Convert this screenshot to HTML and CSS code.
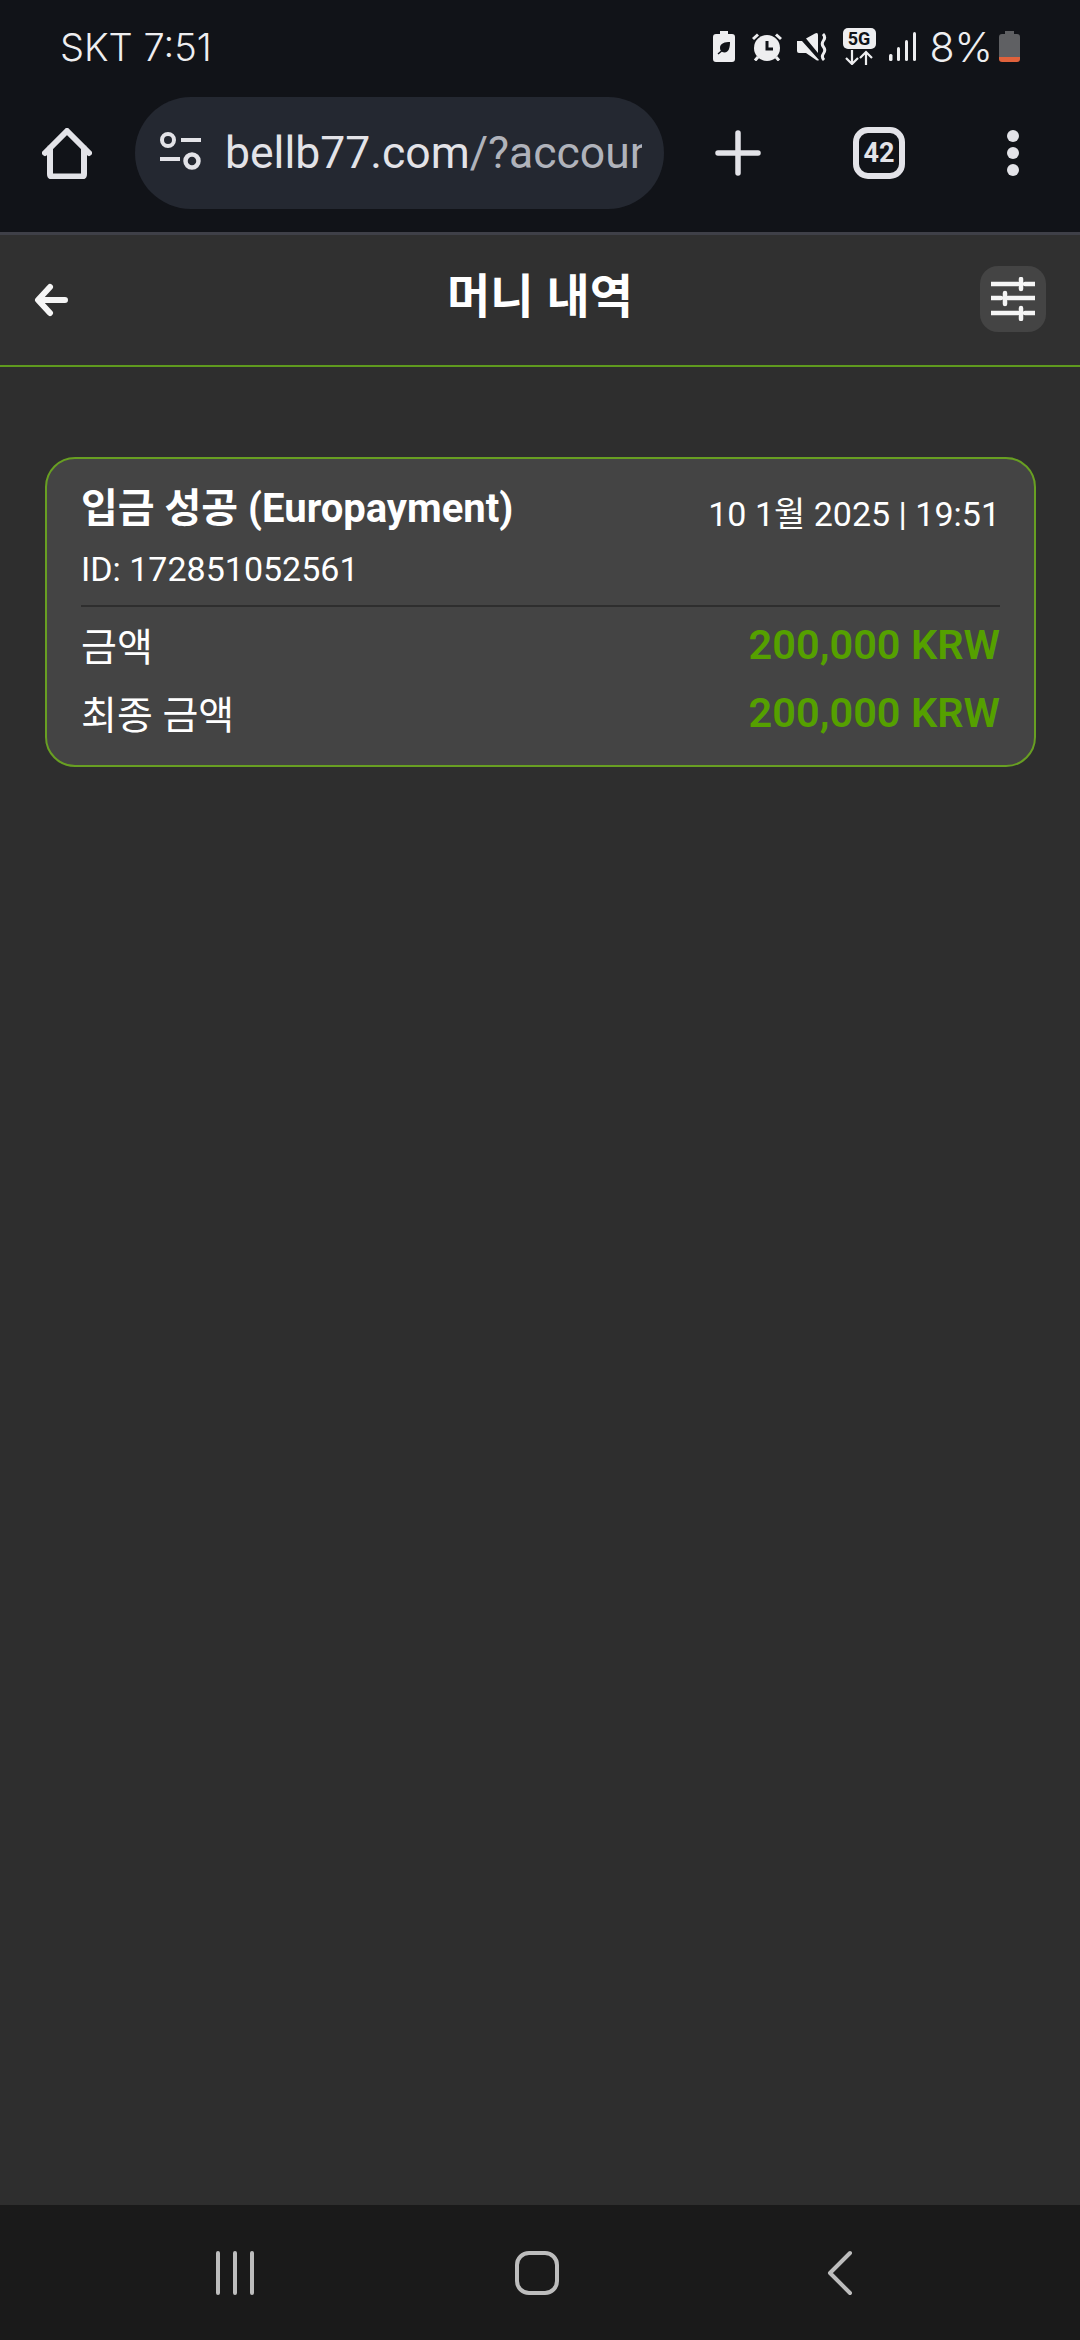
FILE: index.html
```html
<!DOCTYPE html>
<html lang="ko">
<head>
    <meta charset="UTF-8">
    <meta name="viewport" content="width=device-width, initial-scale=1.0">
    <title>머니 내역</title>
    <link rel="stylesheet" href="styles.css">
</head>
<body>
    <div class="chrome">
        <div class="status-bar">
            <span class="status-text">SKT 7:51</span>
            <div class="status-icons">
                <svg class="ico-leaf" viewBox="0 0 22 31">
                    <path fill="#eeeef0" fill-rule="evenodd" d="M7 0h8v3h4a3 3 0 0 1 3 3v22a3 3 0 0 1-3 3H3a3 3 0 0 1-3-3V6a3 3 0 0 1 3-3h4zM17 11c-5 0-10 1-10 6 0 1 .3 2 .8 2.700L4.500 22.500l1 1 3.300-2.800c.8.500 1.700.8 2.700.8 4.500 0 5.500-5.500 5.500-10.500z"/>
                </svg>
                <svg class="ico-alarm" viewBox="0 0 30 28">
                    <circle cx="15" cy="15" r="13" fill="#eeeef0"/>
                    <path d="M15 8v8h6" fill="none" stroke="#111318" stroke-width="3"/>
                    <path d="M1 6l5-4.500M29 6l-5-4.500M6 24l-3 3.500M24 24l3 3.500" fill="none" stroke="#eeeef0" stroke-width="3"/>
                </svg>
                <svg class="ico-mute" viewBox="0 0 30 28">
                    <path fill="#eeeef0" d="M0 8h5l17 19q-1 1-2.500.3L9 20H2q-2 0-2-2zM9 5.500l9-5q3-1.500 3 1.500v18z"/>
                    <path d="M26 1q3 3 .5 6.500t0 6.500 0 6.500 .5 6.500" fill="none" stroke="#eeeef0" stroke-width="3"/>
                </svg>
                <div class="ico-net">
                    <span class="net-badge">5G</span>
                    <svg viewBox="0 0 33 15">
                        <path d="M9 0v13M3 8l6 6 6-6M23 15V2M17 8l6-6 6 6" fill="none" stroke="#eeeef0" stroke-width="2.200"/>
                    </svg>
                </div>
                <svg class="ico-signal" viewBox="0 0 27 29">
                    <g fill="#eeeef0">
                        <rect x="0" y="22" width="3.500" height="7" rx="1.500"/>
                        <rect x="8" y="15" width="3" height="14" rx="1.500"/>
                        <rect x="16" y="8" width="3" height="21" rx="1.500"/>
                        <rect x="24" y="0" width="3" height="29" rx="1.500"/>
                    </g>
                </svg>
                <span class="status-text battery-pct">8%</span>
                <svg class="ico-battery" viewBox="0 0 21 31">
                    <path fill="#5f6063" d="M6 0h9v3h3a3 3 0 0 1 3 3v20H0V6a3 3 0 0 1 3-3h3z"/>
                    <path fill="#e0623c" d="M0 26h21v2a3 3 0 0 1-3 3H3a3 3 0 0 1-3-3z"/>
                </svg>
            </div>
        </div>
        <div class="toolbar">
            <svg class="ico-home" viewBox="0 0 50 51">
                <path d="M3 25L25 3l22 22M8 20v26q0 2.500 2.500 2.500h29q2.500 0 2.500-2.500V20" fill="none" stroke="#e3e3e8" stroke-width="6" stroke-linejoin="round" stroke-linecap="round"/>
            </svg>
            <div class="url-pill">
                <svg class="ico-tune" viewBox="0 0 42 44">
                    <circle cx="9" cy="9" r="6" fill="none" stroke="#e3e3e8" stroke-width="4"/>
                    <path d="M22 9h20M1 28h20" stroke="#e3e3e8" stroke-width="4"/>
                    <circle cx="33" cy="30" r="6.500" fill="none" stroke="#e3e3e8" stroke-width="4.500"/>
                </svg>
                <div class="url-text">bellb77.com<span class="url-rest">/?account</span></div>
            </div>
            <svg class="ico-plus" viewBox="0 0 46 46">
                <path d="M23 3v40M3 23h40" stroke="#e3e3e8" stroke-width="5.500" stroke-linecap="round"/>
            </svg>
            <div class="tab-count">42</div>
            <div class="menu-dots"><span></span><span></span><span></span></div>
        </div>
    </div>

    <header class="page-header">
        <svg class="ico-back" viewBox="0 0 34 34">
            <path d="M31 17H5M16 4L4 17l12 13" fill="none" stroke="#f5f5f5" stroke-width="6" stroke-linecap="round" stroke-linejoin="round"/>
        </svg>
        <h1>머니 내역</h1>
        <button class="filter-btn" type="button">
            <svg viewBox="0 0 44 44">
                <path d="M0 7h27M34 7h10M0 21h10M17 21h27M0 36h27M34 36h10" stroke="#f5f5f5" stroke-width="4.500" stroke-linecap="round"/>
                <path d="M30 2v10M14 16v11M30 31v11" stroke="#f5f5f5" stroke-width="4.500" stroke-linecap="round"/>
            </svg>
        </button>
    </header>

    <main class="content">
        <section class="history-card">
            <div class="card-top">
                <div class="card-title">입금 성공 (Europayment)</div>
                <div class="card-date">10 1월 2025 | 19:51</div>
            </div>
            <div class="card-id">ID: 172851052561</div>
            <div class="card-rows">
                <div class="card-row"><span>금액</span><strong>200,000 KRW</strong></div>
                <div class="card-row"><span>최종 금액</span><strong>200,000 KRW</strong></div>
            </div>
        </section>
    </main>

    <nav class="nav-bar">
        <svg class="ico-recent" viewBox="0 0 40 44">
            <path d="M3 2v40M20 2v40M37 2v40" stroke="#bdbdbd" stroke-width="4" stroke-linecap="round"/>
        </svg>
        <svg class="ico-square" viewBox="0 0 44 44">
            <rect x="2" y="2" width="40" height="40" rx="12" fill="none" stroke="#bdbdbd" stroke-width="4"/>
        </svg>
        <svg class="ico-chevron" viewBox="0 0 26 46">
            <path d="M23 3L3 23l20 20" fill="none" stroke="#bdbdbd" stroke-width="4" stroke-linecap="round" stroke-linejoin="round"/>
        </svg>
    </nav>
</body>
</html>
```

FILE: styles.css
```css
* {
    margin: 0;
    padding: 0;
    box-sizing: border-box;
}

body {
    width: 1080px;
    height: 2340px;
    display: flex;
    flex-direction: column;
    overflow: hidden;
    background: #2e2e2e;
    color: #fff;
    font-family: Roboto, "Noto Sans CJK KR", sans-serif;
}

svg {
    display: block;
    flex-shrink: 0;
}

/* browser + phone chrome */
.chrome {
    height: 235px;
    flex-shrink: 0;
    background: #111318;
    border-bottom: 3px solid #3f4048;
}

.status-bar {
    height: 97px;
    padding: 0 60px 4px 60px;
    display: flex;
    justify-content: space-between;
    align-items: center;
}

.status-text {
    font-family: Inter, sans-serif;
    font-weight: 350;
    font-size: 38px;
    color: #eeeef0;
}

.status-icons {
    display: flex;
    align-items: center;
}

.ico-leaf { width: 22px; height: 31px; margin-right: 17px; }
.ico-alarm { width: 30px; height: 28px; margin-right: 15px; }
.ico-mute { width: 30px; height: 28px; margin-right: 16px; }

.ico-net {
    width: 33px;
    height: 37px;
    margin-right: 13px;
    display: flex;
    flex-direction: column;
    gap: 1px;
}

.net-badge {
    height: 21px;
    border-radius: 5px;
    background: #eeeef0;
    color: #111318;
    font-size: 18px;
    font-weight: 700;
    line-height: 21px;
    text-align: center;
}

.ico-net svg {
    width: 33px;
    height: 15px;
}

.ico-signal { width: 27px; height: 29px; margin-right: 14px; }

.battery-pct {
    margin-right: 6px;
    font-size: 41px;
}

.ico-battery { width: 21px; height: 31px; }

.toolbar {
    height: 112px;
    display: flex;
    align-items: center;
    padding-left: 42px;
}

.ico-home { width: 50px; height: 51px; margin-right: 43px; }

.url-pill {
    width: 529px;
    height: 112px;
    margin-right: 51px;
    padding: 0 22px 0 24px;
    display: flex;
    align-items: center;
    gap: 24px;
    border-radius: 56px;
    background: #242831;
}

.ico-tune { width: 42px; height: 44px; }

.url-text {
    flex: 1;
    overflow: hidden;
    white-space: nowrap;
    font-family: Roboto, sans-serif;
    font-size: 44.500px;
    color: #e3e3e8;
}

.url-rest {
    color: #b0b3bb;
}

.ico-plus { width: 46px; height: 46px; margin-right: 92px; }

.tab-count {
    width: 52px;
    height: 52px;
    margin-right: 102px;
    border: 6px solid #e3e3e8;
    border-radius: 15px;
    font-size: 27px;
    font-weight: 700;
    line-height: 40px;
    text-align: center;
    color: #e3e3e8;
}

.menu-dots {
    display: flex;
    flex-direction: column;
    gap: 5px;
}

.menu-dots span {
    width: 12px;
    height: 12px;
    border-radius: 50%;
    background: #e3e3e8;
}

/* page */
.page-header {
    height: 132px;
    flex-shrink: 0;
    padding: 0 34px;
    display: grid;
    grid-template-columns: 1fr auto 1fr;
    align-items: center;
    background: #303030;
    border-bottom: 2px solid #5f9a1e;
}

.ico-back {
    width: 34px;
    height: 34px;
}

.page-header h1 {
    font-family: "Noto Sans CJK KR", sans-serif;
    font-size: 47px;
    font-weight: 700;
    line-height: 60px;
    margin-bottom: 14px;
}

.filter-btn {
    justify-self: end;
    width: 66px;
    height: 66px;
    margin-bottom: 2px;
    display: flex;
    align-items: center;
    justify-content: center;
    border: none;
    border-radius: 18px;
    background: #444;
}

.filter-btn svg {
    width: 44px;
    height: 44px;
}

.content {
    flex: 1;
    padding: 90px 44px 0 45px;
}

.history-card {
    height: 310px;
    padding: 25px 34px 0 34px;
    border: 2px solid #689f22;
    border-radius: 30px;
    background: #444;
}

.card-top {
    height: 50px;
    display: flex;
    justify-content: space-between;
    align-items: flex-start;
}

.card-title {
    font-size: 40px;
    font-weight: 700;
    line-height: 50px;
}

.card-date {
    margin-top: 5px;
    font-size: 34px;
    line-height: 50px;
}

.card-id {
    margin-top: 13px;
    height: 44px;
    font-size: 34px;
    line-height: 44px;
}

.card-rows {
    margin-top: 14px;
    padding-top: 12px;
    display: flex;
    flex-direction: column;
    gap: 18px;
    border-top: 2px solid #2e2e2e;
}

.card-row {
    display: flex;
    justify-content: space-between;
    align-items: center;
    height: 50px;
    font-size: 39px;
}

.card-row strong {
    font-size: 41.500px;
    font-weight: 600;
    color: #55a000;
}

.nav-bar {
    height: 135px;
    flex-shrink: 0;
    display: flex;
    align-items: center;
    padding-left: 215px;
    background: #1a1a1a;
}

.ico-recent { width: 40px; height: 44px; margin-right: 260px; }
.ico-square { width: 44px; height: 44px; margin-right: 268px; }
.ico-chevron { width: 26px; height: 46px; }
```
